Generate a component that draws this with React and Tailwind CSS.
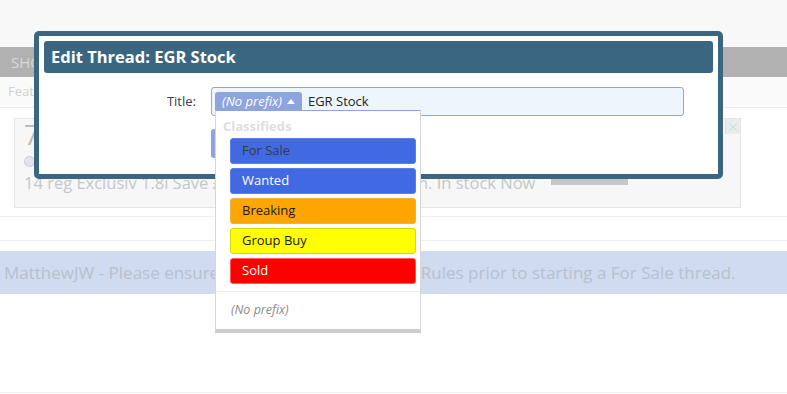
import { X } from "lucide-react";

const prefixes = [
  { label: "For Sale", cls: "bg-[#4169e1] border-[#5b7fe6] text-[#3a3a3a]" },
  { label: "Wanted", cls: "bg-[#4169e1] border-[#5b7fe6] text-white" },
  { label: "Breaking", cls: "bg-[#ffa500] border-[#f0b040] text-[#1a1a1a]" },
  { label: "Group Buy", cls: "bg-[#ffff00] border-[#d8d800] text-[#1a1a1a]" },
  { label: "Sold", cls: "bg-[#ff0000] border-[#ff5a5a] text-white" },
];

function BackgroundPage() {
  return (
    <div>
      <div className="h-[47px] bg-[#f8f8f8]" />
      <div className="flex h-[30px] items-center bg-[#b1b1b1] pl-[11px] text-[15px] text-[#d9d9d9]">
        SHOP
      </div>
      <div className="flex h-[31px] items-center border-b border-[#ececec] bg-[#fafafa] pl-[8px] text-[13px] text-[#d0d0d0]">
        Featured
      </div>

      <div className="border-b border-[#efefef] pb-[8px] pl-[14px] pr-[46px] pt-[10px]">
        <div className="relative flex h-[90px] border border-[#e6e6e6] bg-[#f7f7f7] pl-[9px]">
          <div className="flex flex-col">
            <div className="mt-[-2px] text-[27px] leading-[36px] text-[#bcbcbc]">795.00</div>
            <div className="mt-[-1px] flex items-center gap-[4px] text-[12px] text-[#d0d0d0]">
              <span className="h-[11px] w-[11px] rounded-full border border-[#c9c9dc] bg-[#e4e4ef]" />
              Seller
            </div>
            <div className="mt-[3px] text-[16.5px] leading-[20px] text-[#c6c6c6]">
              14 reg Exclusiv 1.8i Save £££ on a new EGR system in. In stock Now
            </div>
          </div>
          <div className="ml-[16px] mt-[40px] h-[26px] w-[77px] bg-[#c5c7c9]" />
          <div className="absolute right-0 top-0 flex h-[15px] w-[15px] items-center justify-center border-l border-[#dcdcdc] bg-[#ebebeb]">
            <X size={14} strokeWidth={1.5} className="text-[#a6dde8]" />
          </div>
        </div>
      </div>

      <div className="h-[24px] border-b border-[#efefef]" />

      <div className="mt-[10px] flex h-[43px] items-center bg-[#d0dbf0] pl-[4px] text-[17px] text-[#b8c0cb]">
        MatthewJW - Please ensure you have read the Trade Rules prior to starting a For Sale thread.
      </div>

      <div className="mt-[98px] border-b border-[#efefef]" />
    </div>
  );
}

function EditModal() {
  return (
    <div className="absolute left-[34px] top-[31px] h-[148px] w-[689px] rounded-[5px] border-[5px] border-[#3b6681] bg-white p-[5px]">
      <div className="flex h-[32px] items-center rounded-[3px] bg-[#3b6681] pl-[7px] text-[16.5px] font-bold text-white">
        Edit Thread: EGR Stock
      </div>
      <div className="mt-[14px] flex">
        <div className="w-[152px] pt-[5px] text-right text-[13px] leading-[18px] text-[#3c3c4c]">Title:</div>
        <div className="ml-[15px] flex h-[29px] w-[473px] items-start rounded-[3px] border border-[#8fa7db] bg-[#eef5fd] pl-[3px] pt-[4px]">
          <div className="flex h-[19px] items-center gap-[5px] rounded-t-[3px] bg-[#8ea4de] pl-[7px] pr-[7px] text-[13px] italic text-white">
            (No prefix)
            <span className="h-0 w-0 border-x-[4px] border-b-[5px] border-x-transparent border-b-white" />
          </div>
          <div className="ml-[6px] text-[13px] leading-[19px] text-[#222]">EGR Stock</div>
        </div>
      </div>
      <div className="ml-[167px] mt-[13px] flex h-[29px] w-[120px] items-center justify-center rounded-[3px] bg-[#8ea4de] text-[13px] text-white">
        Save Changes
      </div>
    </div>
  );
}

function PrefixMenu() {
  return (
    <div className="absolute left-[215px] top-[110px] w-[206px] border-x border-b-[4px] border-t border-x-[#d6d6d6] border-b-[#cccccc] border-t-[#8ea4de] bg-white">
      <div className="pl-[7px] pt-[7px] text-[13px] font-bold leading-[16px] text-[#dedede]">Classifieds</div>
      <div className="ml-[14px] mr-[4px] mt-[4px] flex flex-col gap-[4px]">
        {prefixes.map((p) => (
          <div
            key={p.label}
            className={`flex h-[26px] items-center rounded-[3px] border pl-[11px] text-[13px] ${p.cls}`}
          >
            {p.label}
          </div>
        ))}
      </div>
      <div className="mt-[7px] border-t border-[#efefef]" />
      <div className="pb-[11px] pl-[15px] pt-[10px] text-[12.5px] italic leading-[16px] text-[#8a8a8a]">(No prefix)</div>
    </div>
  );
}

export default function App() {
  return (
    <div className="relative h-[394px] w-[787px] overflow-hidden bg-white font-['Open_Sans',sans-serif]">
      <BackgroundPage />
      <EditModal />
      <PrefixMenu />
    </div>
  );
}
